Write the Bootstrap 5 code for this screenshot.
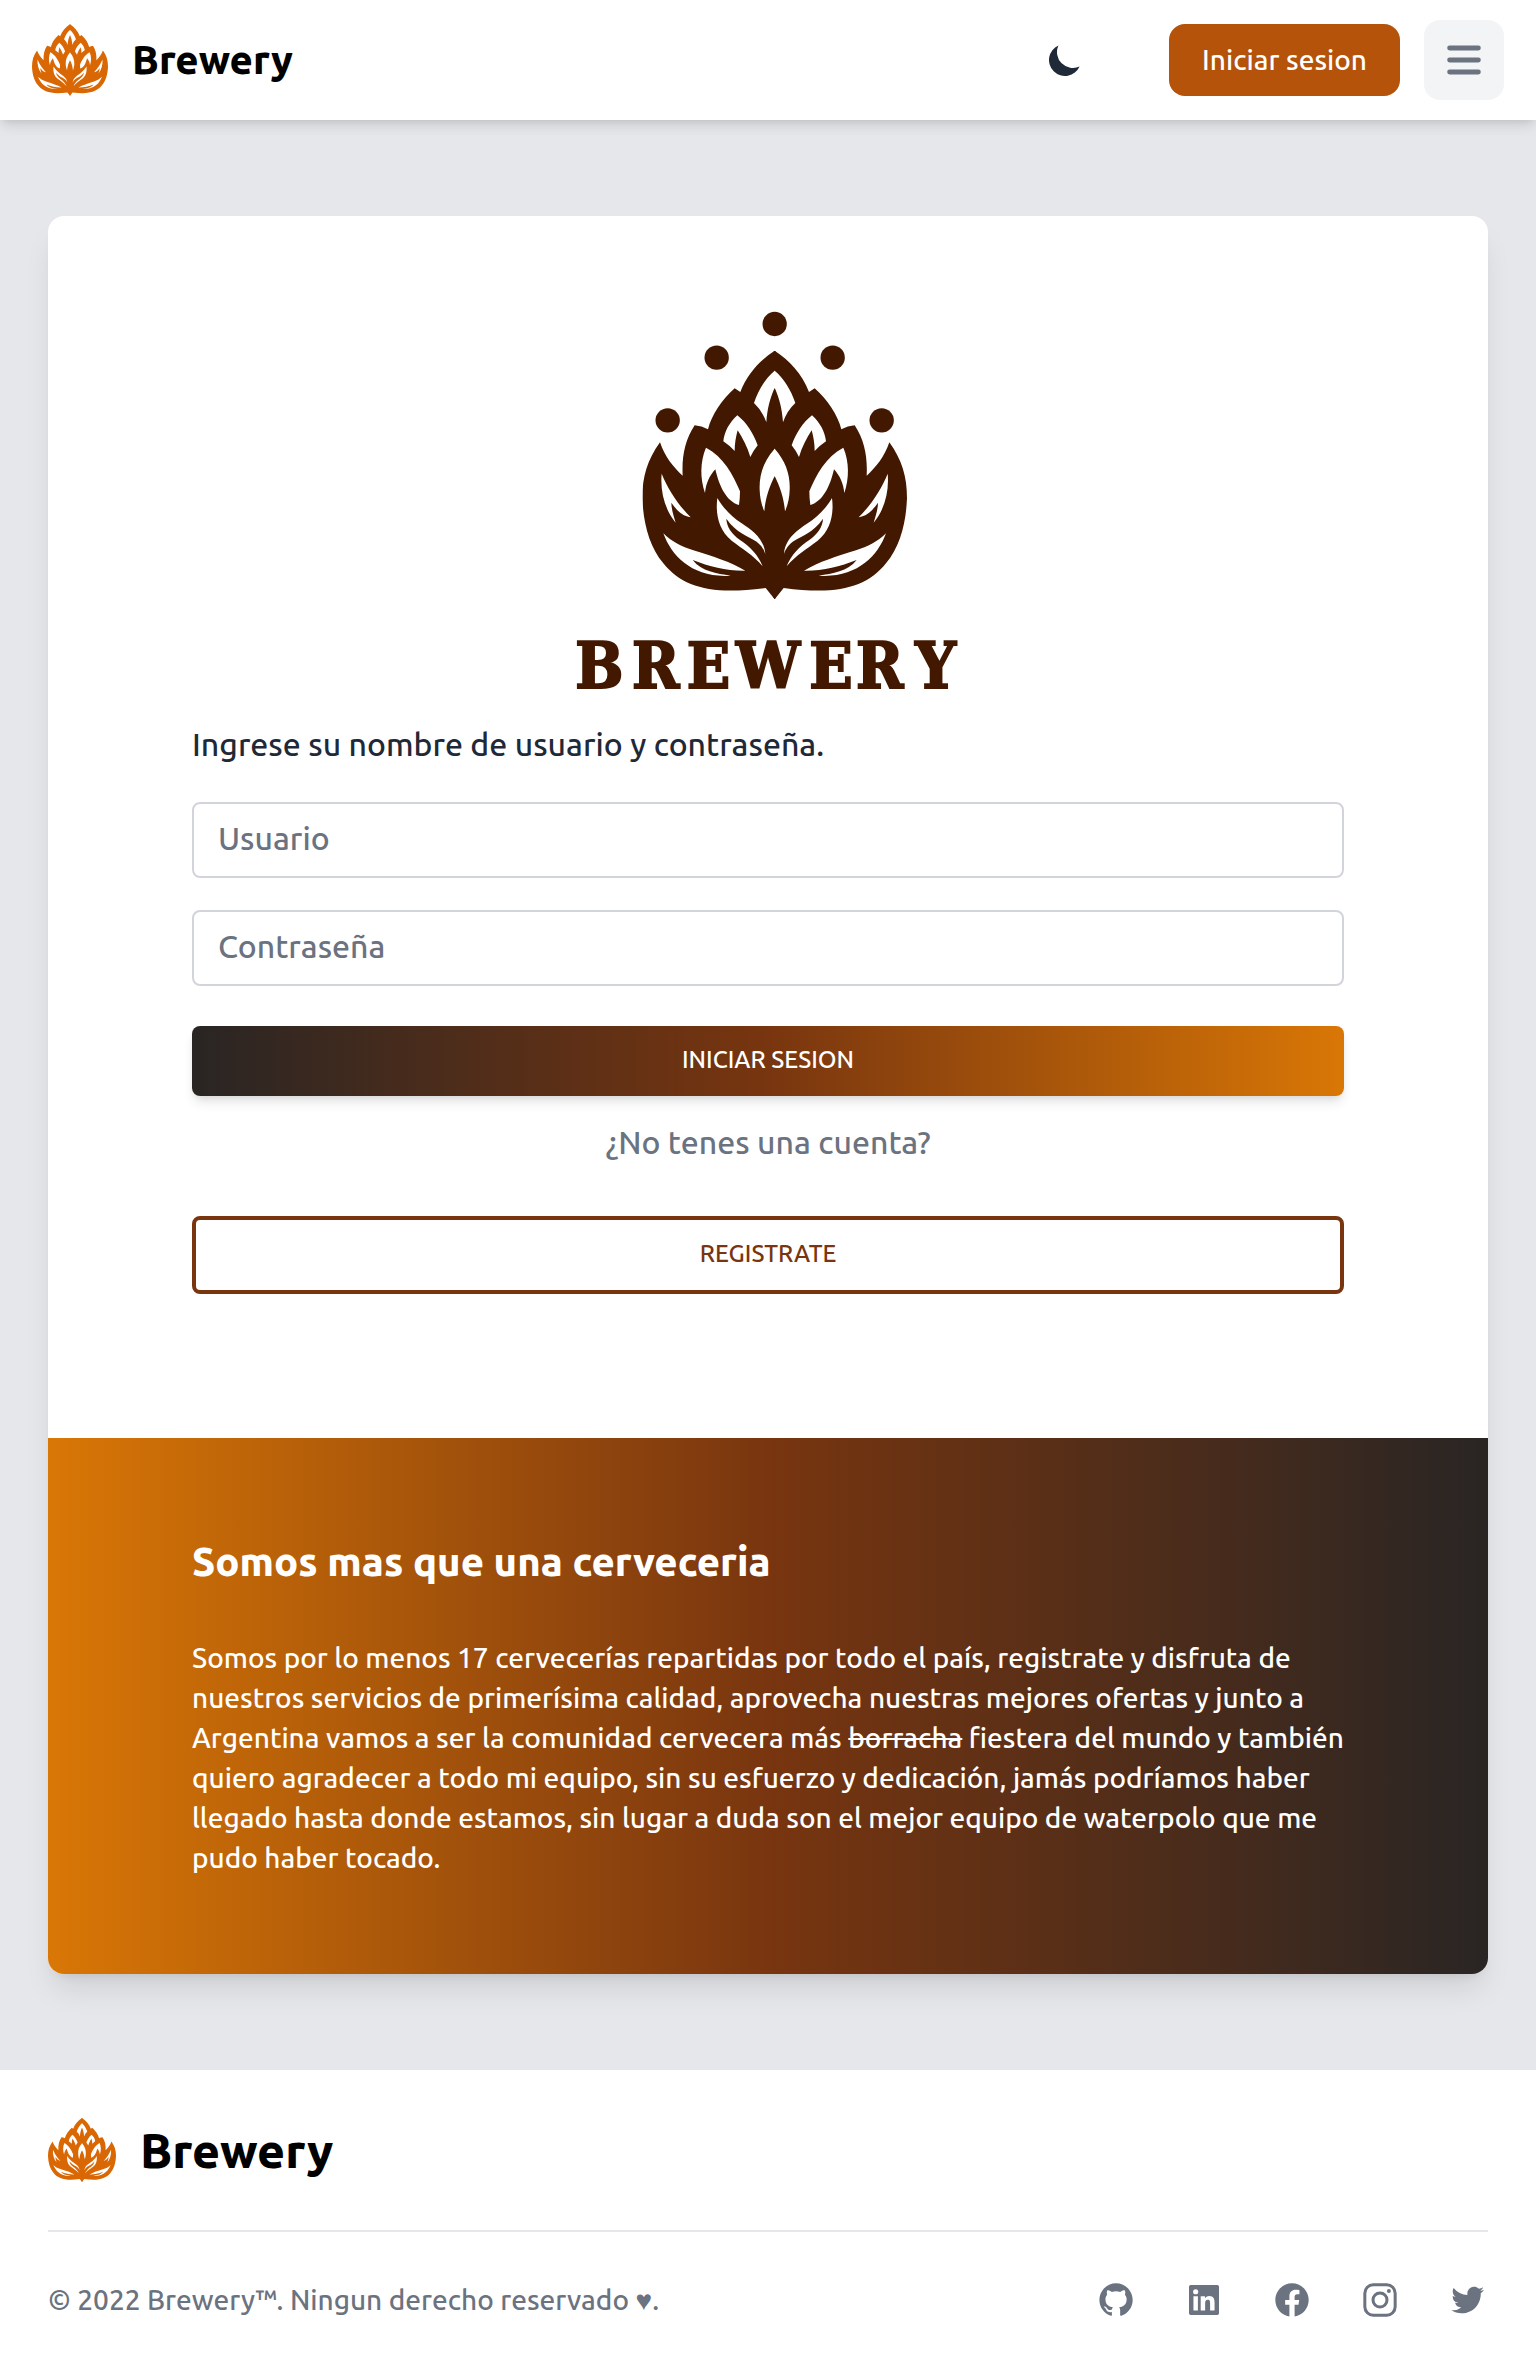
<!DOCTYPE html>
<html lang="es">
<head>
<meta charset="utf-8">
<meta name="viewport" content="width=device-width, initial-scale=1">
<title>Brewery</title>
<link rel="stylesheet" href="https://cdn.jsdelivr.net/npm/bootstrap@5.3.0/dist/css/bootstrap.min.css">
<style>
  body { font-family: "Ubuntu", "Ubuntu Sans", "Noto Sans", sans-serif; font-size: 32px; font-weight: 500; line-height: 48px; color: #1f2937; background: #e5e7eb; }
  .site-header { min-height: 120px; padding: 0 32px; box-shadow: 0 8px 12px -2px rgba(0,0,0,.1), 0 4px 8px -4px rgba(0,0,0,.1); }
  .brand-link { color: #000; font-weight: 800; }
  .brand-top { font-size: 40px; line-height: 56px; }
  .brand-bottom { font-size: 48px; line-height: 64px; }
  .hop { color: #d96704; }
  .btn-theme { padding: 20px; margin-right: 40px; color: #1f2937; }
  .btn-login { font-size: 28px; line-height: 40px; font-weight: 500; padding: 16px 33px; border: 0; border-radius: 16px; background: #b45309; }
  .btn-menu { padding: 16px; width: 80px; height: 80px; border-radius: 16px; background: #f3f4f6; color: #6b7280; }
  .btn-login, .btn-login:hover { color: #fff; }
  .page-main { padding: 96px 48px; }
  .login-card { border: 0; border-radius: 16px; overflow: hidden; box-shadow: 0 20px 30px -6px rgba(0,0,0,.1), 0 8px 12px -8px rgba(0,0,0,.1); }
  .login-pane { padding: 96px 144px 144px; }
  .about-pane { padding: 96px 144px; color: #fff; background: linear-gradient(to right, #d97706, #78350f, #292524); }
  .wordmark-logo { width: 384px; color: #431800; margin-bottom: 28px; overflow: visible; }
  .login-input { font-size: 32px; font-weight: 500; line-height: 48px; padding: 10px 24px 14px; border: 2px solid #d1d5db; border-radius: 8px; color: #374151; }
  .login-input::placeholder { color: #6b7280; }
  .btn-wide { font-size: 24px; font-weight: 500; border-radius: 8px; text-transform: uppercase; }
  .btn-enter, .btn-enter:hover { margin: 40px 0 22px; padding: 14px 48px 16px; line-height: 40px; border: 0; color: #fff; background: linear-gradient(to right, #292524, #78350f, #d97706); box-shadow: 0 8px 12px -2px rgba(0,0,0,.1), 0 4px 8px -4px rgba(0,0,0,.1); }
  .btn-join, .btn-join:hover { padding: 14px 48px 16px; line-height: 40px; border: 4px solid #78350f; color: #78350f; background: transparent; }
  .muted-text { color: #6b7280; }
  .about-title { font-size: 40px; line-height: 56px; font-weight: 800; }
  .about-text { font-size: 28px; line-height: 40px; }
  .site-footer { padding: 48px; background: #fff; }
  .footer-rule { border-top: 2px solid #e5e7eb; margin: 48px 0; opacity: 1; }
  .footer-note { font-size: 28px; line-height: 40px; }
  .gap-48 { gap: 48px; }
  .mb-32 { margin-bottom: 32px; }
  .mb-48 { margin-bottom: 48px; }
  .intro-text { margin-bottom: 34px; }
  .join-text { margin-bottom: 50px; }
  svg { display: block; }
</style>
</head>
<body>
<svg width="0" height="0" class="position-absolute" aria-hidden="true">
  <defs>
    <path id="hop-body" fill="currentColor" d="M644 182C601 210 562 250 541 306L524 295C485 330 455 375 444 418Q425 408 404 406C375 450 365 500 368 557C338 530 315 500 300 457C262 510 247 560 247 625C250 700 268 770 310 820C370 895 460 915 617 894L644 928L648 922V186Z"/>
    <g id="hop-cuts" fill="#fff">
      <path d="M644 242C616 265 595 300 582 339Q607 362 619 397C622 355 630 325 644 293L645 297V243Z"/>
      <path d="M532 376C508 398 493 425 490 454Q508 466 524 483C524 460 528 440 533 421C548 445 562 470 571 501Q580 482 593 466C580 430 560 398 532 376Z"/>
      <path d="M644 476C610 515 597 555 599 600Q600 635 613 664C616 625 628 590 644 558L645 560V477Z"/>
      <path d="M438 473C420 515 420 565 435 609C438 580 448 558 466 538C478 590 500 635 537 645Q540 625 540 604C520 555 490 500 438 473Z"/>
      <path d="M305 551C300 605 315 660 347 698C340 675 334 655 334 638C348 658 365 678 392 682C355 645 325 600 305 551Z"/>
      <path d="M472 624C466 670 475 720 515 752C545 775 580 795 608 829C595 795 570 770 540 750C515 732 500 710 499 686C530 730 560 735 590 755Q610 770 616 792C612 745 575 720 545 700C515 680 490 655 472 624Z"/>
      <path d="M310 730C335 800 400 865 512 857C470 850 425 845 398 810C450 830 500 843 556 842C510 815 460 800 400 781C365 770 335 755 310 730Z"/>
    </g>
    <symbol id="hop" viewBox="247 182 794 746">
      <use href="#hop-body"/>
      <use href="#hop-body" transform="matrix(-1 0 0 1 1288 0)"/>
      <use href="#hop-cuts"/>
      <use href="#hop-cuts" transform="matrix(-1 0 0 1 1288 0)"/>
    </symbol>
  </defs>
</svg>

<header class="site-header bg-white d-flex align-items-center justify-content-between position-relative">
  <a href="#" class="brand-link brand-top text-decoration-none d-flex align-items-center gap-4">
    <svg class="hop" width="76" height="72" aria-hidden="true"><use href="#hop"/></svg>
    <span>Brewery</span>
  </a>
  <div class="d-flex align-items-center gap-4">
    <button type="button" class="btn btn-theme border-0" aria-label="Modo oscuro">
      <svg width="40" height="40" viewBox="0 0 20 20" fill="currentColor"><path d="M17.293 13.293A8 8 0 016.707 2.707a8.001 8.001 0 1010.586 10.586z"/></svg>
    </button>
    <button type="button" class="btn btn-login">Iniciar sesion</button>
    <button type="button" class="btn btn-menu border-0" aria-label="Menu">
      <svg width="48" height="48" viewBox="0 0 20 20" fill="currentColor" fill-rule="evenodd"><path d="M3 5a1 1 0 011-1h12a1 1 0 110 2H4a1 1 0 01-1-1zM3 10a1 1 0 011-1h12a1 1 0 110 2H4a1 1 0 01-1-1zM3 15a1 1 0 011-1h12a1 1 0 110 2H4a1 1 0 01-1-1z"/></svg>
    </button>
  </div>
</header>

<main class="page-main">
  <div class="card login-card">
    <section class="login-pane">
      <svg class="wordmark-logo mx-auto" viewBox="48 66 1152 1140" role="img" aria-label="Brewery">
        <g fill="currentColor">
          <circle cx="644" cy="102" r="36.500"/>
          <circle cx="470" cy="203" r="36.500"/><circle cx="818" cy="203" r="36.500"/>
          <circle cx="323" cy="391" r="36.500"/><circle cx="965" cy="391" r="36.500"/>
        </g>
        <svg x="247" y="182" width="794" height="746"><use href="#hop"/></svg>
        <text y="1193" x="46 216 380 528 748 888 1066" fill="currentColor" stroke="currentColor" stroke-width="6" font-family="'DejaVu Serif Condensed', 'DejaVu Serif', serif" font-weight="700" font-size="190">BREWERY</text>
      </svg>
      <form>
        <p class="intro-text">Ingrese su nombre de usuario y contraseña.</p>
        <input type="text" class="form-control login-input mb-32" placeholder="Usuario" aria-label="Usuario">
        <input type="password" class="form-control login-input" placeholder="Contraseña" aria-label="Contraseña">
        <button type="button" class="btn btn-wide btn-enter w-100">Iniciar sesion</button>
        <p class="muted-text text-center join-text">¿No tenes una cuenta?</p>
        <button type="button" class="btn btn-wide btn-join w-100">Registrate</button>
      </form>
    </section>
    <section class="about-pane">
      <h4 class="about-title mb-48">Somos mas que una cerveceria</h4>
      <p class="about-text mb-0">Somos por lo menos 17 cervecerías repartidas por todo el país, registrate y disfruta de nuestros servicios de primerísima calidad, aprovecha nuestras mejores ofertas y junto a Argentina vamos a ser la comunidad cervecera más <s>borracha</s> fiestera del mundo y también quiero agradecer a todo mi equipo, sin su esfuerzo y dedicación, jamás podríamos haber llegado hasta donde estamos, sin lugar a duda son el mejor equipo de waterpolo que me pudo haber tocado.</p>
    </section>
  </div>
</main>

<footer class="site-footer">
  <a href="#" class="brand-link brand-bottom text-decoration-none d-flex align-items-center gap-4">
    <svg class="hop" width="68" height="64" aria-hidden="true"><use href="#hop"/></svg>
    <span>Brewery</span>
  </a>
  <hr class="footer-rule">
  <div class="d-flex align-items-center justify-content-between muted-text">
    <span class="footer-note">© 2022 Brewery™. Ningun derecho reservado ♥.</span>
    <div class="d-flex gap-48">
      <a href="#" class="muted-text" aria-label="GitHub"><svg width="40" height="40" viewBox="0 0 24 24" fill="currentColor"><path d="M12.026 2c-5.509 0-9.974 4.465-9.974 9.974 0 4.406 2.857 8.145 6.821 9.465.499.090.679-.217.679-.481 0-.237-.008-.865-.011-1.696-2.775.602-3.361-1.338-3.361-1.338-.452-1.152-1.107-1.459-1.107-1.459-.905-.619.069-.605.069-.605 1.002.070 1.527 1.028 1.527 1.028.890 1.524 2.336 1.084 2.902.829.091-.645.351-1.085.635-1.334-2.214-.251-4.542-1.107-4.542-4.930 0-1.087.389-1.979 1.024-2.675-.101-.253-.446-1.268.099-2.640 0 0 .837-.269 2.742 1.021a9.582 9.582 0 0 1 2.496-.336 9.554 9.554 0 0 1 2.496.336c1.906-1.291 2.742-1.021 2.742-1.021.545 1.372.203 2.387.099 2.640.640.696 1.024 1.587 1.024 2.675 0 3.833-2.330 4.675-4.552 4.922.355.308.675.916.675 1.846 0 1.334-.012 2.410-.012 2.737 0 .267.178.577.687.479C19.146 20.115 22 16.379 22 11.974 22 6.465 17.535 2 12.026 2z"/></svg></a>
      <a href="#" class="muted-text" aria-label="LinkedIn"><svg width="40" height="40" viewBox="0 0 24 24" fill="currentColor"><path d="M20 3H4a1 1 0 0 0-1 1v16a1 1 0 0 0 1 1h16a1 1 0 0 0 1-1V4a1 1 0 0 0-1-1zM8.339 18.337H5.667v-8.590h2.672v8.590zM7.003 8.574a1.548 1.548 0 1 1 0-3.096 1.548 1.548 0 0 1 0 3.096zm11.335 9.763h-2.669V14.160c0-.996-.018-2.277-1.388-2.277-1.390 0-1.601 1.086-1.601 2.207v4.248h-2.667v-8.590h2.560v1.174h.037c.355-.675 1.227-1.387 2.524-1.387 2.704 0 3.203 1.778 3.203 4.092v4.710z"/></svg></a>
      <a href="#" class="muted-text" aria-label="Facebook"><svg width="40" height="40" viewBox="0 0 24 24" fill="currentColor"><path d="M12.001 2.002c-5.522 0-9.999 4.477-9.999 9.999 0 4.990 3.656 9.126 8.437 9.879v-6.988h-2.540v-2.891h2.540V9.798c0-2.508 1.493-3.891 3.776-3.891 1.094 0 2.240.195 2.240.195v2.459h-1.264c-1.240 0-1.628.772-1.628 1.563v1.875h2.771l-.443 2.891h-2.328v6.988C18.344 21.129 22 16.992 22 12.001c0-5.522-4.477-9.999-9.999-9.999z"/></svg></a>
      <a href="#" class="muted-text" aria-label="Instagram"><svg width="40" height="40" viewBox="0 0 24 24" fill="none" stroke="currentColor" stroke-width="1.800"><rect x="2.900" y="2.900" width="18.200" height="18.200" rx="5"/><circle cx="12" cy="12" r="4.200"/><circle cx="17.340" cy="6.660" r="1.200" fill="currentColor" stroke="none"/></svg></a>
      <a href="#" class="muted-text" aria-label="Twitter"><svg width="40" height="40" viewBox="0 0 24 24" fill="currentColor"><path d="M19.633 7.997c.013.175.013.349.013.523 0 5.325-4.053 11.461-11.460 11.461-2.282 0-4.402-.661-6.186-1.809.324.037.636.050.973.050a8.070 8.070 0 0 0 5.001-1.721 4.036 4.036 0 0 1-3.767-2.793c.249.037.499.062.761.062.361 0 .724-.050 1.061-.137a4.027 4.027 0 0 1-3.230-3.953v-.050c.537.299 1.160.486 1.820.511a4.022 4.022 0 0 1-1.796-3.354c0-.748.199-1.434.548-2.032a11.457 11.457 0 0 0 8.306 4.215c-.062-.300-.100-.611-.100-.923a4.026 4.026 0 0 1 4.028-4.028c1.160 0 2.207.486 2.943 1.272a7.957 7.957 0 0 0 2.556-.973 4.020 4.020 0 0 1-1.771 2.220 8.073 8.073 0 0 0 2.319-.624 8.645 8.645 0 0 1-2.019 2.083z"/></svg></a>
    </div>
  </div>
</footer>
<script src="https://cdn.jsdelivr.net/npm/bootstrap@5.3.0/dist/js/bootstrap.bundle.min.js"></script>
</body>
</html>
